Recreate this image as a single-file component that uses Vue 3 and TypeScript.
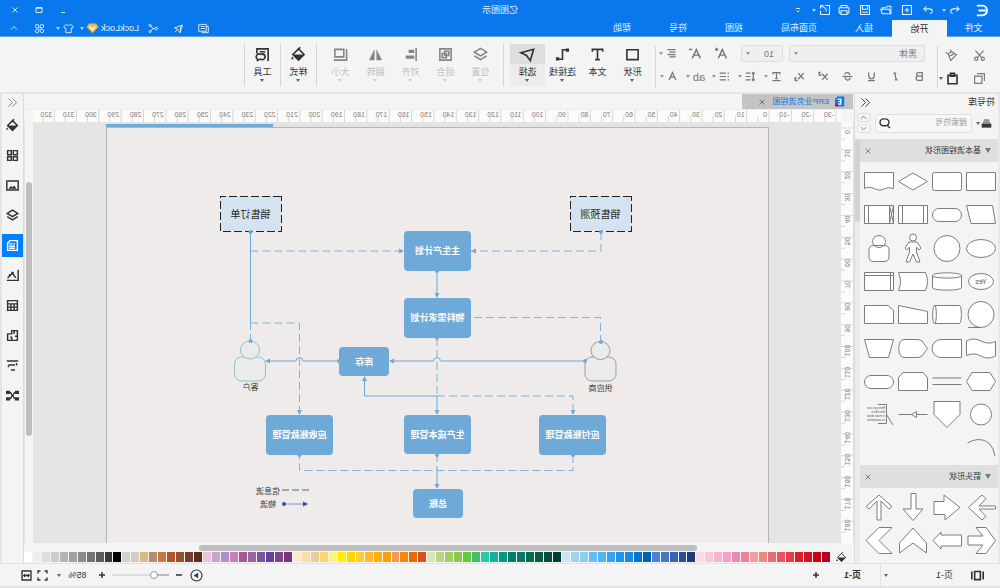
<script setup lang="ts">
import { ref } from 'vue'

interface Stroke { d: string; f?: boolean }

const s = (...ds: string[]): Stroke[] => ds.map(d => ({ d }))
const f = (...ds: string[]): Stroke[] => ds.map(d => ({ d, f: true }))

const icons: Record<string, Stroke[]> = {
  undo: s('M6 3 2.5 6.5 6 10', 'M3 6.5H10C15 6.5 14.5 12 11 13'),
  redo: s('M10 3 13.5 6.5 10 10', 'M13 6.5H6C1 6.5 1.5 12 5 13'),
  add: s('M2 2H14V14H2Z', 'M8 5V11M5 8H11'),
  open: s('M1.5 13V3H6L7.5 5H13V7', 'M1.5 13 4 7H15L13 13Z'),
  save: s('M2 2H14V14H2Z', 'M4.5 2V7H11.5V2', 'M4 11H12'),
  print: s('M4 5V2H12V5', 'M4 12H1.5V5H14.5V12H12', 'M4 9H12V14H4Z'),
  exportFile: s('M8 2H2V14H14V9', 'M14 2H10M14 2V6M6 10C6 6 9 4 13 3'),
  more: s('M4 5H12', 'M5 9 8 12 11 9'),
  close: s('M3 3 13 13M13 3 3 13'),
  maximize: s('M2 3H14V13H2Z', 'M2 4.5H14'),
  minimize: s('M4 13H12'),
  up: s('M2 11 8 5 14 11'),
  down: s('M2 5 8 11 14 5'),
  chevrons: s('M8 2 2 8 8 14', 'M14 2 8 8 14 14'),
  comment: s('M4 2H15V12H4Z', 'M6 5H12M6 8H12', 'M4 5H1V14H11'),
  pointer: s('M2 3 14 7 9 9 6 14ZM5 4V14M9 9 13 13'),
  share: s('M4 6A2 2 0 1 0 4 10 2 2 0 1 0 4 6', 'M6 8H9L12 4M9 8 12 12', 'M13 2A1.5 1.5 0 1 0 13 5 1.5 1.5 0 1 0 13 2M13 11A1.5 1.5 0 1 0 13 14 1.5 1.5 0 1 0 13 11'),
  shirt: s('M5 2 1 5 3 8 4 7V14H12V7L13 8 15 5 11 2C10 4 6 4 5 2Z'),
  apps: s('M7 7H4.5A2.5 2.5 0 1 1 7 4.5ZM9 7V4.5A2.5 2.5 0 1 1 11.5 7ZM7 9V11.5A2.5 2.5 0 1 1 4.5 9ZM9 9H11.5A2.5 2.5 0 1 1 9 11.5Z'),
  cut: s('M3 2 11 11M13 2 5 11', 'M4 10A2 2 0 1 0 4 14 2 2 0 1 0 4 10M12 10A2 2 0 1 0 12 14 2 2 0 1 0 12 10'),
  copy: s('M5 5H14V14H5Z', 'M2 11V2H11'),
  painter: s('M2 7 8 3 12 6 9 14Z', 'M8 3 10 1M12 6 15 4M5 6 11 9'),
  paste: s('M2.5 4H13.5V14.5H2.5Z', 'M5.5 5V1.5H10.5V5Z'),
  bold: s('M4 2.5H9C13 2.5 13 7.5 9 7.5H4ZM4 7.5H10C14 7.5 14 13.5 10 13.5H4Z'),
  italic: s('M7 3H11M5 13H9M9 3 7 13'),
  underline: s('M4 2V7C4 13 12 13 12 7V2', 'M3 14H13'),
  strike: s('M12 5C11 1 4 2 5 6M4 10C5 15 12 14 11 9', 'M1 8H15'),
  sup: s('M2 4 10 13M10 4 2 13', 'M12 2H14.5V4L12 6H15'),
  sub: s('M2 3 10 12M10 3 2 12', 'M12 10H14.5V12L12 14H15'),
  textT: s('M3 5V2.5H13V5M8 2.5V11M6 11H10', 'M2 14H14'),
  spacing: s('M4 2V14M2 4 4 2 6 4M2 12 4 14 6 12', 'M8 3H15M8 8H15M8 13H15'),
  list: s('M6 3H15M6 8H15M6 13H15', 'M1.5 3H3.5M1.5 8H3.5M1.5 13H3.5'),
  alignText: s('M2 2.5H14M2 6H11M2 9.5H14M2 13H11'),
  bigA: s('M2 14 7 3 12 14M4 10H10', 'M12 3H16M14 1V5'),
  smallA: s('M2 14 7 3 12 14M4 10H10', 'M12 3H16'),
  letterA: s('M3 13 8 2 13 13M5 9H11'),
  rect: s('M2 3H14V13.5H2Z'),
  text: s('M2.5 5V2.5H13.5V5M8 2.5V13.5M5.5 13.5H10.5'),
  connector: [...s('M3 3H8V13H13'), ...f('M1 1.5H4.5V5H1ZM11.5 11H15V14.5H11.5Z')],
  select: s('M1.5 2.500 15 6 9 9 5 14.500Z'),
  layers: s('M8 1.5 14.5 5.5 8 9.5 1.5 5.5Z', 'M1.5 9.5 8 13.5 14.5 9.5'),
  group: s('M2 2H14V14H2Z', 'M4.5 4.5H9V9H4.5ZM7 7H11.5V11.5H7Z'),
  align: [...s('M2 1V15'), ...f('M4 3H10V6.5H4ZM4 9H13V12.5H4Z')],
  flip: f('M7 2V14H1ZM9 2 15 14H9Z'),
  size: s('M4.5 2.5H14V10.5H4.5Z', 'M1.5 2V14H15'),
  bucket: [...s('M8 2 14 8 8 14 2 8ZM8 2 6 .5'), ...f('M2 8H14L8 14ZM14.5 10 16 13H13Z')],
  tools: s('M3 14H2V2H14V7M5 5H11M5 8H8', 'M10 8A3 3 0 1 0 10 13 3 3 0 1 0 10 8M12 13 14 15'),
  library: [...f('M1 8H15V14H1Z'), ...s('M3 6H13M4 3H12')],
  search: s('M6.5 1.5A5 5 0 1 1 6.5 11 5 5 0 1 1 6.5 1.5', 'M10 10 14.5 14.5'),
  grid: s('M2 2H7V7H2ZM9.5 2H14V7H9.5ZM2 9.5H7V14H2ZM9.5 9.5H14V14H9.5Z'),
  picture: [...s('M1 2.5H15V13.5H1Z'), ...f('M3 12 6 8 8 10 10 8.5 13 12Z')],
  note: s('M2 2H11L14 5V14H2Z', 'M5 6H7M8 6H12M5 9H12M5 11.5H12'),
  chart: [...s('M1 1V14H15', 'M4 11 8 5 11 8 14 11'), ...f('M6.500 3.500H9.500V6.500H6.500ZM10 6.500H12.500V9H10Z')],
  table: s('M2 2H14V14H2ZM2 6H14M2 10H14M6 6V14M10 6V14'),
  puzzle: s('M2 2H9V6H14V14H2ZM6 2V6M2 9H5M9 14V10H11'),
  gantt: s('M1 2.5H15M3 5V8M5 7.5H13M5 13.5H10M13 8V10'),
  mind: [...s('M4 4C8 4 6 8 8 8 10 8 8 4 12 4M4 12C8 12 6 8 8 8 10 8 8 12 12 12'), ...f('M0 2H5V6H0ZM11 2H16V6H11ZM0 10H5V14H0ZM11 10H16V14H11Z')],
  pages: s('M4.5 3H11.5V13H4.5Z', 'M1 3V13M15 3V13'),
  plus: s('M8 2V14M2 8H14'),
  minus: s('M2 8H14'),
  play: [...s('M8 1.2A6.8 6.8 0 1 0 8 14.8 6.8 6.8 0 1 0 8 1.2'), ...f('M6 4.5 11.5 8 6 11.5Z')],
  full: s('M1.5 5V1.5H5M11 1.5H14.5V5M14.5 11V14.5H11M5 14.5H1.5V11'),
  fit: s('M1.5 1.5H14.5V14.5H1.5Z', 'M4 8H12M6 6 4 8 6 10M10 6 12 8 10 10'),
}

const quick = ['redo', 'add', 'open', 'save', 'print']
const tabs = ['文件', '开始', '插入', '页面布局', '视图', '符号', '帮助']
const formatButtons = [
  { icon: 'bold', label: '加粗' }, { icon: 'italic', label: '斜体' }, { icon: 'underline', label: '下划线' },
  { icon: 'strike', label: '删除线' }, { icon: 'sup', label: '上标' }, { icon: 'sub', label: '下标' },
]
const formatMenus = [{ icon: 'textT', label: '文字方向' }, { icon: 'spacing', label: '行距' }, { icon: 'list', label: '列表' }]

const toolGroups = [
  { cls: 'g4', items: [
    { icon: 'rect', label: '形状', menu: true }, { icon: 'text', label: '文本' },
    { icon: 'connector', label: '连接线', menu: true }, { icon: 'select', label: '选择', menu: true, on: true }] },
  { cls: 'g5', items: ['layers 位置', 'group 组合', 'align 对齐', 'flip 翻转', 'size 大小'].map(t => {
    const [icon, label] = t.split(' ')
    return { icon, label, menu: true, off: true }
  }) },
  { cls: 'g1', items: [{ icon: 'bucket', label: '样式', menu: true }] },
  { cls: 'g1', items: [{ icon: 'tools', label: '工具', menu: true }] },
] as { cls: string; items: { icon: string; label: string; menu?: boolean; on?: boolean; off?: boolean }[] }[]

const flowShapes: string[] = [
  'M4.500 7.500H33.500V25.500H4.500Z',
  'M6.500 7.500H31.500Q33.500 7.500 33.500 9.500V23.500Q33.500 25.500 31.500 25.500H6.500Q4.500 25.500 4.500 23.500V9.500Q4.500 7.500 6.500 7.500Z',
  'M4.500 16.500 19 8 33.500 16.500 19 25Z',
  'M4.500 7.500H33.500V23.500C26 19 22 28 14 24Q10 21.500 4.500 23.500Z',
  'M7.500 7.500H33.500L29 25.500H4.500Z',
  'M11 10.500H27A6.500 6.500 0 0 1 27 23.500H11A6.500 6.500 0 0 1 11 10.500Z',
  'M4.500 7.500H33.500V25.500H4.500ZM8.500 7.500V25.500M29.500 7.500V25.500',
  'M4.500 7.500H33.500V25.500H4.500ZM8.500 7.500V25.500M29.500 7.500V25.500M4.500 7.500 8.500 25.500M8.500 7.500 4.500 25.500',
  'M19 7.500A14.500 9 0 1 0 19 25.500A14.500 9 0 1 0 19 7.500Z',
  'M19 3.500A13 13 0 1 0 19 29.500A13 13 0 1 0 19 3.500Z',
  'M19 2A3.500 3.500 0 1 0 19 9A3.500 3.500 0 1 0 19 2ZM15 10H23L27 16 25 18 22.500 15V20L26 30H22.500L19 22 15.500 30H12L15.500 20V15L13 18 11 16Z',
  'M14 13.500Q9 13.500 9 18V25Q9 29.500 14 29.500H24Q29 29.500 29 25V18Q29 13.500 24 13.500ZM19 3.500A6.500 6 0 1 0 19 15.500A6.500 6 0 1 0 19 3.500Z',
  'M19 8.500A12.500 8 0 1 0 19 24.500A12.500 8 0 1 0 19 8.500Z',
  'M4.500 10.500C4.500 7 33.500 7 33.500 10.500V22.500C33.500 26 4.500 26 4.500 22.500ZM4.500 10.500C4.500 14 33.500 14 33.500 10.500',
  'M6.500 7.500H33.500Q29.500 16.500 33.500 25.500H6.500Q2.500 16.500 6.500 7.500Z',
  'M4.500 7.500H33.500V25.500H4.500ZM4.500 10.500H33.500M7.500 7.500V25.500',
  'M19 3.500A13 13 0 1 0 19 29.500A13 13 0 1 0 19 3.500ZM19 29.500H32',
  'M6.500 7.500H31.500C34 7.500 34 25.500 31.500 25.500H6.500C4 25.500 4 7.500 6.500 7.500M31.500 7.500C29 7.500 29 25.500 31.500 25.500',
  'M4.500 13.500 33.500 7.500V25.500H4.500Z',
  'M10 7.500H33.500V25.500H4.500V12.500Z',
  'M4.500 9.500Q11 13 19 9T33.500 9V23.500Q26 20 19 24T4.500 24Z',
  'M4.500 7.500H25A9 9 0 0 1 25 25.500H4.500Z',
  'M4.500 16.500 10 9Q12 7.500 15 7.500H28C35 7.500 35 25.500 28 25.500H15Q12 25.500 10 24Z',
  'M4.500 7.500H33.500L28.500 25.500H9.500Z',
  'M10 7.500H28L33.500 16.500 28 25.500H10L4.500 16.500Z',
  'M4.500 13H33.500M4.500 19.500H33.500',
  'M9 7.500H29L33.500 12.500V25.500H4.500V12.500Z',
  'M11 10.500H27A6.500 6.500 0 0 1 27 23.500H11A6.500 6.500 0 0 1 11 10.500Z',
  'M19 6A10.500 10.500 0 1 0 19 27A10.500 10.500 0 1 0 19 6Z',
  'M6 3.500H32V16.500L19 29.500 6 16.500Z',
  'M4.500 16.500H15.500M15.500 13.500V19.500L20.500 16.500ZM20.500 16.500H33.500',
  'M20 6.500H11.500V25.500H20M11.500 16.500 5 27',
  'M5 24Q8 7 22 7.500Q28 8 32.500 11',
]
const arrowShapes: string[] = [
  'M4.500 15H21L14 7.500 18 4 31.500 16.500 18 29 14 25.500 21 18H4.500Z',
  'M6 16.500 22 4V10.500H32V23.500H21V29Z',
  'M16 2.500H21V18H29L19 29.500 9 18H16Z',
  'M17 29V10L9 18 6 15.500 19 4 32 15.500 29 18 21 10V29Z',
  'M4.500 16.500 14 3.500H24L17 12H32V21H17L24 29.500H14Z',
  'M4.500 11H25V8L33 16.500 25 25V22H4.500Z',
  'M5.500 19 19 4 32.500 19V29L19 19 5.500 29Z',
  'M6 3.500H19L32 16.500 19 29.500H6L19 16.500Z',
]

const sidebar = ['bucket', 'grid', 'picture', 'layers', 'note', 'chart', 'table', 'puzzle', 'gantt', 'mind']
const activeSide = ref('note')
const font = ref('黑体')
const size = ref('10')
const zoom = ref(23)

const hTicks = Array.from({ length: 36 }, (_, i) => ({ v: (i - 3) * 10, p: 72 + (i - 3) * 22.34 }))
const vTicks = Array.from({ length: 19 }, (_, i) => ({ v: i * 10, p: 6 + i * 21.85 }))

const palette = (
  'b4001e c8001e d2141e dc1e28 e63c46 eb5064 e66e78 eb8c78 f0a0a0 f0829b e68cb4 f5a0c8 fab4c8 fac8d2 fadce6 ' +
  '1e3c78 28509b 3c64b4 4678be 5082d2 0064b4 0078d2 148ce1 1e96eb 3ca0f0 50b4f0 64bef5 8ccdf0 a0d2f0 c8e6f5 ' +
  '003c32 00503c 0a5a46 006e50 0a7864 007d6e 009b82 14b496 28c8aa 46be64 64c83c 8cc850 a0cd64 b4d78c dce6b4 dc501e ' +
  'e96a00 f5870a f19a58 f0a30a ffb000 ffb833 fbcf33 ffd700 fff000 fdf37f ffd470 eccd97 fddcab fde8d0 7b3276 85428c 67409a 75559c 9866a0 a05a8c ' +
  'cf7fb4 a990d0 c8a5cb ebc3dc 5b2b1a 753c30 95502c b0552a c17a42 b98b72 e0b980 d4ccc8 ccd4cc 000000 3f3739 5b5b5b 737373 8b8b8b a0a0a0 b4b4b4 cccccc dddddd eeeeee ffffff'
).split(' ').map(c => '#' + c)

const boxes = [
  { x: 298, y: 103, w: 67, h: 40, t: '主生产计划' }, { x: 298, y: 170, w: 67, h: 40, t: '物料需求计划' },
  { x: 380, y: 219, w: 50, h: 29, t: '库存' }, { x: 163, y: 287, w: 67, h: 40, t: '应付账款管理' },
  { x: 298, y: 287, w: 67, h: 39, t: '生产成本管理' }, { x: 436, y: 287, w: 67, h: 40, t: '应收账款管理' },
  { x: 306, y: 361, w: 50, h: 29, t: '总账' },
]
const solid = [
  'M332 143V166', 'M184 233H328.500A3.500 3.500 0 0 1 335.500 233H376', 'M430 233H466A3.500 3.500 0 0 1 473 233H499',
  'M332 268H404.500V252', 'M332 268V283', 'M332 338V357', 'M518.500 104V194',
]
const dashed = [
  'M168 104V123H302', 'M518.500 123H369', 'M518.500 194V213', 'M518.500 195H469.500V283', 'M295 189.500H168.500V213',
  'M332 210V268', 'M332 268H196V283', 'M196 327V342.500H469.500V327', 'M332 326V338',
]
const heads = [
  'M298 123 293 120.500V125.500Z', 'M365 123 370 120.500V125.500Z', 'M332 170 329.500 165H334.500Z', 'M380 233 375 230.500V235.500Z',
  'M504 233 499 230.500V235.500Z', 'M404.500 248 402 253H407Z', 'M332 287 329.500 282H334.500Z', 'M196 287 193.500 282H198.500Z',
  'M469.500 287 467 282H472Z', 'M332 361 329.500 356H334.500Z',
]
const dots = [[518.5, 213], [168, 214], [184, 233], [332, 143], [332, 210], [430, 233], [332, 327], [196, 327], [469.5, 327]]
</script>

<template>
  <div class="app">
    <header class="top">
      <div class="titlebar">
        <div class="quick">
          <svg class="logo" viewBox="0 0 16 16" aria-label="logo"><path d="M15 2H8A5.500 6 0 0 0 8 14H15M4 8H13" /></svg>
          <button class="menu-btn" aria-label="undo">
            <svg class="ic" viewBox="0 0 16 16"><path v-for="p in icons.undo" :key="p.d" :d="p.d" :class="{ fill: p.f }" /></svg><i class="caret" />
          </button>
          <button v-for="q in quick" :key="q" class="quick-btn" :aria-label="q">
            <svg class="ic" viewBox="0 0 16 16"><path v-for="p in icons[q]" :key="p.d" :d="p.d" /></svg>
          </button>
          <button class="menu-btn" aria-label="export">
            <svg class="ic" viewBox="0 0 16 16"><path v-for="p in icons.exportFile" :key="p.d" :d="p.d" /></svg><i class="caret" />
          </button>
          <button class="quick-btn" aria-label="more"><svg class="ic tiny" viewBox="0 0 16 16"><path v-for="p in icons.more" :key="p.d" :d="p.d" /></svg></button>
        </div>
        <h1>亿图图示</h1>
        <div class="win">
          <button v-for="w in ['minimize', 'maximize', 'close']" :key="w" :aria-label="w"><svg class="ic tiny" viewBox="0 0 16 16"><path v-for="p in icons[w]" :key="p.d" :d="p.d" /></svg></button>
        </div>
      </div>
      <nav class="tabs">
        <button v-for="t in tabs" :key="t" class="tab" :class="{ active: t === '开始', file: t === '文件' }">{{ t }}</button>
        <div class="account">
          <button v-for="a in ['comment', 'pointer', 'share']" :key="a" class="acc" :aria-label="a"><svg class="ic small thin" viewBox="0 0 16 16"><path v-for="p in icons[a]" :key="p.d" :d="p.d" /></svg></button>
          <button class="user">LockLock<svg class="gem" viewBox="0 0 16 16"><path d="M3.500 2H12.500L16 6.500 8 15 0 6.500Z" fill="#f6b544" /><path d="M4.500 6 8 10.500 11.500 6" fill="none" stroke="#fff" stroke-width="2" /></svg><i class="caret" /></button>
          <button class="shirt" aria-label="theme"><svg class="ic small thin" viewBox="0 0 16 16"><path v-for="p in icons.shirt" :key="p.d" :d="p.d" /></svg><i class="caret" /></button>
          <button class="apps" aria-label="apps"><svg class="ic small thin" viewBox="0 0 16 16"><path v-for="p in icons.apps" :key="p.d" :d="p.d" /></svg></button>
          <button class="fold" aria-label="collapse"><svg class="ic tiny" viewBox="0 0 16 16"><path v-for="p in icons.up" :key="p.d" :d="p.d" /></svg></button>
        </div>
      </nav>
    </header>

    <section class="ribbon">
      <div class="clip">
        <button aria-label="cut"><svg class="ic" viewBox="0 0 16 16"><path v-for="p in icons.cut" :key="p.d" :d="p.d" /></svg></button>
        <button aria-label="format painter"><svg class="ic" viewBox="0 0 16 16"><path v-for="p in icons.painter" :key="p.d" :d="p.d" /></svg></button>
        <button aria-label="copy"><svg class="ic" viewBox="0 0 16 16"><path v-for="p in icons.copy" :key="p.d" :d="p.d" /></svg></button>
        <button class="dark paste" aria-label="paste"><svg class="ic bold" viewBox="0 0 16 16"><path v-for="p in icons.paste" :key="p.d" :d="p.d" /></svg><i class="caret" /></button>
      </div>
      <div class="font">
        <div class="frow one">
          <label class="pick family"><select v-model="font" aria-label="字体"><option>黑体</option></select><i class="caret" /></label>
          <label class="pick num"><select v-model="size" aria-label="字号"><option>10</option></select><i class="caret" /></label>
          <button class="wide" aria-label="larger"><svg class="ic" viewBox="0 0 16 16"><path v-for="p in icons.bigA" :key="p.d" :d="p.d" /></svg></button>
          <button class="wide" aria-label="smaller"><svg class="ic" viewBox="0 0 16 16"><path v-for="p in icons.smallA" :key="p.d" :d="p.d" /></svg></button>
          <button class="fm" aria-label="align"><svg class="ic small" viewBox="0 0 16 16"><path v-for="p in icons.alignText" :key="p.d" :d="p.d" /></svg><i class="caret" /></button>
        </div>
        <div class="frow two">
          <button v-for="b in formatButtons" :key="b.icon" class="fb" :aria-label="b.label"><svg class="ic small" viewBox="0 0 16 16"><path v-for="p in icons[b.icon]" :key="p.d" :d="p.d" /></svg></button>
          <button v-for="b in formatMenus" :key="b.icon" class="fm" :aria-label="b.label"><svg class="ic small" viewBox="0 0 16 16"><path v-for="p in icons[b.icon]" :key="p.d" :d="p.d" /></svg><i class="caret" /></button>
          <button class="fm ab">ab<i class="caret" /></button>
          <button class="fm" aria-label="color"><svg class="ic small" viewBox="0 0 16 16"><path v-for="p in icons.letterA" :key="p.d" :d="p.d" /></svg><i class="caret" /></button>
        </div>
      </div>
      <div v-for="(g, i) in toolGroups" :key="i" class="group" :class="g.cls">
        <button v-for="t in g.items" :key="t.label" class="tool" :class="{ on: t.on, off: t.off }">
          <span class="face"><svg class="ic big" viewBox="0 0 16 16"><path v-for="p in icons[t.icon]" :key="p.d" :d="p.d" :class="{ fill: p.f }" /></svg></span>
          <span>{{ t.label }}</span><i v-if="t.menu" class="caret" />
        </button>
      </div>
    </section>

    <main class="work">
      <aside class="lib">
        <div class="lib-head"><h2>符号库</h2><button aria-label="collapse library"><svg class="ic small thin" viewBox="0 0 16 16"><path v-for="p in icons.chevrons" :key="p.d" :d="p.d" /></svg></button></div>
        <div class="lib-search">
          <button class="libmenu dark" aria-label="libraries"><svg class="ic small" viewBox="0 0 16 16"><path v-for="p in icons.library" :key="p.d" :d="p.d" :class="{ fill: p.f }" /></svg><i class="caret" /></button>
          <label class="find"><input type="text" placeholder="搜索符号" aria-label="搜索符号"><svg class="ic small glass" viewBox="0 0 16 16"><path v-for="p in icons.search" :key="p.d" :d="p.d" transform="matrix(-1 0 0 1 16 0)" /></svg></label>
          <div class="steps">
            <button v-for="d in ['up', 'down']" :key="d" :aria-label="d"><svg viewBox="0 0 16 16" class="ic step"><path v-for="p in icons[d]" :key="p.d" :d="p.d" /></svg></button>
          </div>
        </div>
        <div class="lib-body">
          <div class="sections">
            <h3><i class="caret tri" />基本流程图形状<button aria-label="close section"><svg class="ic tiny" viewBox="0 0 16 16"><path v-for="p in icons.close" :key="p.d" :d="p.d" /></svg></button></h3>
            <div class="shapes flow">
              <svg v-for="(d, i) in flowShapes" :key="i" viewBox="2 0 34 33">
                <path :d="d" :class="{ open: i === 31 || i === 32 }" />
                <text v-if="i === 12" x="19" y="19" text-anchor="middle">Yes</text>
                <g v-if="i === 31" class="note"><text x="13" y="11">Here you can</text><text x="13" y="15">describe it</text><text x="13" y="19">in more detail</text><text x="13" y="23">as annotation</text></g>
              </svg>
            </div>
            <h3><i class="caret tri" />箭头形状<button aria-label="close section"><svg class="ic tiny" viewBox="0 0 16 16"><path v-for="p in icons.close" :key="p.d" :d="p.d" /></svg></button></h3>
            <div class="shapes arrows">
              <svg v-for="(d, i) in arrowShapes" :key="i" viewBox="2 0 34 33"><path :d="d" /></svg>
            </div>
          </div>
          <div class="track"><div class="thumb" /></div>
        </div>
      </aside>

      <section class="center">
        <div class="docs">
          <button class="doc"><svg class="docicon" viewBox="0 0 12 12"><path d="M1 0H9L12 3V12H1Z" fill="#0a78ed" /><path d="M9 3H5V9H9M5 6H8" fill="none" stroke="#fff" stroke-width="1.500" /><circle cx="10" cy="10" r="2" fill="#f00" /></svg><span>ERP业务流程图</span><svg class="ic tiny" viewBox="0 0 16 16"><path v-for="p in icons.close" :key="p.d" :d="p.d" /></svg></button>
        </div>
        <div class="hrule">
          <svg width="808" height="12">
            <g v-for="t in hTicks" :key="t.v"><path :d="`M${t.p} 0V12M${t.p + 11.2} 6V12`" /><text :x="t.p + 2" y="7">{{ t.v }}</text></g>
          </svg>
        </div>
        <div class="stage">
          <div class="vrule">
            <svg width="13" height="422">
              <g v-for="t in vTicks" :key="t.v"><path :d="`M0 ${t.p}H13M8 ${t.p + 11}H13`" /><text :transform="`translate(8 ${t.p + 4}) rotate(-90)`" text-anchor="middle">{{ t.v }}</text></g>
            </svg>
          </div>
          <div class="canvas">
            <div class="bar"><i /></div>
            <div class="page">
              <svg width="663" height="416" viewBox="0 0 663 416">
                <g class="wires"><path v-for="d in solid" :key="d" :d="d" /><path v-for="d in dashed" :key="d" :d="d" class="dash" /></g>
                <g class="person"><rect x="153" y="229" width="31" height="24" rx="7" /><ellipse cx="168.500" cy="222.500" rx="9.500" ry="9" /></g>
                <g class="person teal"><rect x="503.500" y="229" width="31" height="24" rx="7" /><ellipse cx="519" cy="222" rx="9.500" ry="9" /></g>
                <g class="ends"><path v-for="d in heads" :key="d" :d="d" /><circle v-for="c in dots" :key="c.join()" :cx="c[0]" :cy="c[1]" r="2" /></g>
                <g v-for="b in boxes" :key="b.t" class="box"><rect :x="b.x" :y="b.y" :width="b.w" :height="b.h" rx="4" /><text :x="b.x + b.w / 2" :y="b.y + b.h / 2 + 3" text-anchor="middle">{{ b.t }}</text></g>
                <g class="source"><rect x="138" y="68" width="61" height="35" /><text x="168.500" y="90" text-anchor="middle">销售预测</text><rect x="488" y="68" width="61" height="35" /><text x="518.500" y="90" text-anchor="middle">销售订单</text></g>
                <g class="ends"><circle cx="168" cy="104" r="2" /><circle cx="518.500" cy="104" r="2" /></g>
                <g class="cap"><text x="168.500" y="263" text-anchor="middle">供应商</text><text x="518.500" y="262" text-anchor="middle">客户</text></g>
                <g class="legend"><path d="M460 362H488" stroke="#4f6580" stroke-dasharray="7 3" /><text x="489" y="366">信息流</text><path d="M462 376H485" stroke="#7a92c6" /><path d="M466 373.500V378.500L461 376Z" class="navy" /><circle cx="485" cy="376" r="2" class="navy" /><text x="493" y="379">物流</text></g>
              </svg>
            </div>
          </div>
          <div class="vscroll"><div class="thumb" /></div>
        </div>
        <div class="hscroll"><div class="thumb" /></div>
        <div class="colors">
          <svg class="ic small dark" viewBox="0 0 16 16"><path v-for="p in icons.bucket" :key="p.d" :d="p.d" :class="{ fill: p.f }" /></svg>
          <div class="swatches"><button v-for="(c, i) in palette" :key="i" :style="{ background: c }" :aria-label="c" /></div>
        </div>
      </section>

      <nav class="side">
        <button class="collapse" aria-label="expand panel"><svg class="ic small thin" viewBox="0 0 16 16"><path v-for="p in icons.chevrons" :key="p.d" :d="p.d" /></svg></button>
        <button v-for="n in sidebar" :key="n" :class="{ active: n === activeSide }" :aria-label="n" @click="activeSide = n">
          <svg class="ic" viewBox="0 0 16 16"><path v-for="p in icons[n]" :key="p.d" :d="p.d" :class="{ fill: p.f }" /></svg>
        </button>
      </nav>
    </main>

    <footer class="status">
      <button class="pg" aria-label="pages"><svg class="ic bold" viewBox="0 0 16 16"><path v-for="p in icons.pages" :key="p.d" :d="p.d" /></svg></button>
      <button class="pagepick"><span>页-1</span><i class="caret" /></button>
      <button class="current">页-1</button>
      <button class="sb" aria-label="add page"><svg class="ic tiny bold" viewBox="0 0 16 16"><path v-for="p in icons.plus" :key="p.d" :d="p.d" /></svg></button>
      <div class="zoom">
        <button class="sb" aria-label="present"><svg class="ic" viewBox="0 0 16 16"><path v-for="p in icons.play" :key="p.d" :d="p.d" :class="{ fill: p.f }" /></svg></button>
        <button class="sb" aria-label="zoom out"><svg class="ic tiny bold" viewBox="0 0 16 16"><path v-for="p in icons.minus" :key="p.d" :d="p.d" /></svg></button>
        <input v-model="zoom" type="range" min="0" max="100" aria-label="zoom">
        <button class="sb" aria-label="zoom in"><svg class="ic tiny bold" viewBox="0 0 16 16"><path v-for="p in icons.plus" :key="p.d" :d="p.d" /></svg></button>
        <button class="pct"><span>85%</span><i class="caret" /></button>
        <button class="sb end" aria-label="full screen"><svg class="ic small bold" viewBox="0 0 16 16"><path v-for="p in icons.full" :key="p.d" :d="p.d" /></svg></button>
        <button class="sb end" aria-label="fit page"><svg class="ic small bold" viewBox="0 0 16 16"><path v-for="p in icons.fit" :key="p.d" :d="p.d" /></svg></button>
      </div>
    </footer>
  </div>
</template>

<style>
body { overflow: hidden; }
</style>

<style scoped>
* { box-sizing: border-box; }
.app { display: flex; flex-direction: column; height: 100vh; transform: scaleX(-1); background: #f4f4f4; color: #222; font: 9px/12px "Liberation Sans", "Noto Sans CJK SC", sans-serif; overflow: hidden; }
button { display: flex; align-items: center; justify-content: center; border: 0; padding: 0; background: none; color: inherit; font: inherit; }
h1, h2, h3 { margin: 0; font: inherit; }
.ic { width: 13px; height: 13px; flex: none; fill: none; stroke: currentColor; stroke-width: 1.4; overflow: visible; }
.ic .fill { fill: currentColor; stroke: none; }
.ic.small { width: 11px; height: 11px; }
.ic.tiny { width: 8px; height: 8px; stroke-width: 1.8; }
.ic.big { width: 15px; height: 15px; stroke-width: 1.7; }
.ic.thin { stroke-width: 1.3; }
.ic.bold { stroke-width: 2; }
.ic.tiny.bold { stroke-width: 3; }
.dark { color: #333; }
.caret { flex: none; border: 2px solid transparent; border-top: 3px solid currentColor; border-bottom: 0; width: 0; height: 0; opacity: 0.75; }

.top { flex: none; background: #0a78ed; color: #e6f1fd; border-bottom: 1px solid #5ca5f2; }
.titlebar { display: grid; grid-template-columns: 1fr auto 1fr; height: 20px; align-items: center; }
.quick { display: flex; align-items: center; }
.quick .ic { width: 12px; height: 12px; }
.quick .ic.tiny { width: 8px; height: 8px; }
.logo { width: 13px; height: 13px; margin: 0 12px 0 11px; fill: none; stroke: #fff; stroke-width: 2.4; }
.menu-btn { gap: 3px; width: 25px; }
.quick-btn { width: 21px; height: 18px; }
.win { display: flex; justify-content: flex-end; padding-right: 3px; }
.win button { width: 24px; height: 18px; }
.tabs { display: flex; height: 16px; }
.tab { padding: 0 19px; }
.tab.file { width: 53px; padding: 0; }
.tab.active { width: 55px; padding: 0; background: #f4f4f4; color: #333; border-radius: 1px 1px 0 0; margin-bottom: -1px; }
.account { display: flex; margin-left: auto; }
.acc { width: 25px; }
.user { gap: 0; padding-left: 2px; }
.gem { width: 13px; height: 12px; margin: 0 2px; }
.shirt { gap: 3px; width: 29px; }
.apps { width: 22px; }
.fold { width: 29px; }

.ribbon { display: flex; flex: none; height: 57px; padding-top: 6px; border-bottom: 2px solid #e5e5e5; color: #777; }
.clip { display: grid; grid-template-columns: 28px 28px; grid-template-rows: 23px 23px; padding-left: 6px; border-right: 1px solid #d6d6d6; height: 42px; margin-top: 3px; }
.clip button { margin-top: -4px; }
.paste { gap: 3px; padding-left: 6px; }
.font { width: 282px; height: 42px; margin-top: 3px; border-right: 1px solid #d6d6d6; }
.font .ic { stroke-width: 1.8; }
.frow { display: flex; height: 23px; align-items: center; margin-top: -4px; }
.frow.two { margin-top: 0; padding-left: 5px; }
.frow.one { padding-left: 12px; }
.pick { display: flex; align-items: center; height: 17px; padding-right: 4px; border: 1px solid #dedede; background: #efefef; border-radius: 2px; }
.pick select { flex: 1; min-width: 0; appearance: none; border: 0; background: none; font: inherit; color: #777; padding: 0 7px; outline: 0; }
.pick.family { width: 136px; margin-right: 6px; }
.pick.num { width: 42px; margin-right: 6px; }
.pick.num select { padding: 0 8px; }
.wide { width: 26px; }
.fb { width: 24px; }
.fm { gap: 3px; width: 26px; padding-left: 3px; }
.fm.ab { font-size: 11px; }
.group { display: flex; border-right: 1px solid #d6d6d6; height: 42px; margin-top: 1px; color: #333; }
.g4, .g5 { padding: 0 6px 0 5px; }
.tool { flex-direction: column; justify-content: flex-start; width: 35px; height: 42px; white-space: nowrap; }
.tool .face { display: flex; align-items: center; justify-content: center; width: 35px; height: 20px; margin-bottom: 2px; }
.tool.on { background: #ececec; }
.tool.on .face { background: #dedede; }
.tool.off { color: #c0c0c0; }
.tool.off .ic { color: #858585; }
.tool .caret { margin-top: 1px; }

.work { display: flex; flex: 1; min-height: 0; }
.lib { display: flex; flex-direction: column; flex: none; width: 146px; border-left: 2px solid #e8e8e8; border-right: 1px solid #dcdcdc; }
.lib-head { display: flex; justify-content: space-between; align-items: center; height: 16px; padding: 0 5px 0 3px; color: #333; }
.lib-search { display: flex; align-items: center; height: 29px; padding-bottom: 3px; }
.libmenu { width: 26px; gap: 1px; padding-left: 2px; }
.find { display: flex; align-items: center; width: 97px; height: 19px; padding: 0 4px; border: 1px solid #e0e0e0; border-radius: 2px; color: #333; background: #f7f7f7; }
.find input { flex: 1; min-width: 0; border: 0; background: none; padding: 0; font: 8px/12px "Liberation Sans", "Noto Sans CJK SC", sans-serif; outline: 0; }
.find input::placeholder { color: #999; }
.ic.glass { stroke-width: 2; }
.steps { display: flex; flex-direction: column; gap: 2px; margin-left: 4px; }
.steps button { width: 14px; height: 9px; border: 1px solid #e0e0e0; border-radius: 2px; }
.ic.step { width: 7px; height: 7px; color: #777; stroke-width: 2; }
.lib-body { display: flex; flex: 1; min-height: 0; }
.sections { flex: 1; overflow: hidden; }
h3 { display: flex; align-items: center; gap: 4px; height: 23px; padding: 0 4px 0 7px; background: #dfdfdf; color: #333; font-size: 8px; }
h3 button { margin-left: auto; color: #777; }
.tri { border-width: 5px 3px 0; color: #555; }
.shapes { display: grid; grid-template-columns: repeat(4, 34px); grid-auto-rows: 1fr; }
.flow { height: 303px; padding-top: 3px; }
.arrows { height: 69px; padding-top: 3px; }
.shapes svg { width: 34px; height: 33px; fill: #fff; stroke: #7d7d7d; stroke-width: 1; }
.shapes .open { fill: none; }
.shapes text { fill: #555; stroke: none; font-size: 7px; }
.shapes .note text { font-size: 3px; }
.track { width: 5px; background: #ebebeb; }
.track .thumb { height: 83px; background: #d2d2d2; border-radius: 3px; }

.center { display: flex; flex-direction: column; flex: 1; min-width: 0; }
.docs { display: flex; height: 16px; padding-left: 1px; border-bottom: 1px solid #ececec; }
.doc { width: 111px; background: #c4c4c4; color: #0a78ed; gap: 6px; font-size: 8px; justify-content: flex-start; padding: 0 16px 0 8px; }
.doc span { flex: 1; text-align: left; white-space: nowrap; }
.doc .ic { color: #666; }
.docicon { width: 10px; height: 11px; }
.hrule { height: 12px; padding-left: 13px; margin-right: 9px; overflow: hidden; }
.hrule svg, .vrule svg { display: block; background: #fbfbfb; stroke: #d6d6d6; fill: none; }
.hrule text, .vrule text { stroke: none; fill: #857a72; font-size: 7px; }
.stage { display: flex; flex: 1; min-height: 0; overflow: hidden; }
.vrule { flex: none; border-left: 1px solid #e0e0e0; width: 13px; overflow: hidden; }
.canvas { flex: 1; min-width: 0; display: flex; flex-direction: column; background: #e4e4e4; padding: 2px 73px 0 72px; }
.bar { flex: none; display: flex; justify-content: flex-end; height: 4px; border-bottom: 1px solid #b6b6b6; }
.bar i { width: 167px; height: 3px; background: #6ea9d7; }
.page { flex: 1; min-height: 0; overflow: hidden; background: #efebea; border-right: 1px solid #b6b6b6; border-left: 1px solid #b6b6b6; }
.page svg { display: block; margin-left: -1px; }
.wires { fill: none; stroke: #6ea9d7; stroke-width: 1; }
.wires .dash { stroke: #7fb2da; stroke-dasharray: 8 4; }
.ends { fill: #6ea9d7; }
.person { fill: #ebebeb; stroke: #a09c9a; }
.person.teal { stroke: #8cc4c8; }
.box rect { fill: #6ea9d7; }
.box text { fill: #fff; font-weight: 700; font-size: 9px; }
.source rect { fill: #d5e2ef; stroke: #222; stroke-dasharray: 8 3; shape-rendering: crispEdges; }
.source text { font-size: 10px; fill: #222; }
.cap text, .legend text { font-size: 8px; fill: #333; }
.navy { fill: #2f559f; }
.vscroll { width: 9px; padding: 60px 1px 0; border-right: 1px solid #e4e4e4; background: #f4f4f4; }
.vscroll .thumb { height: 254px; background: #bfbfbf; border-radius: 4px; }
.hscroll { height: 8px; padding: 2px 0 0 157px; }
.hscroll .thumb { width: 74%; height: 6px; background: #bfbfbf; border-radius: 3px; }
.colors { display: flex; align-items: center; height: 12px; padding-left: 7px; gap: 6px; }
.swatches { display: flex; flex: 1; gap: 1px; }
.swatches button { flex: 1; height: 10px; }

.side { display: flex; flex-direction: column; width: 24px; flex: none; border-right: 2px solid #e4e4e4; border-left: 1px solid #dcdcdc; color: #333; }
.side button { height: 23px; margin-bottom: 7px; }
.side .ic { stroke-width: 1.8; }
.side .collapse { height: 17px; margin: 0 0 3px; color: #777; }
.side .collapse .ic { stroke-width: 1.3; }
.side .active { background: #0080ff; color: #fff; }

.status { display: flex; align-items: center; flex: none; height: 25px; border-top: 1px solid #e2e2e2; border-bottom: 2px solid #e4e4e4; color: #333; }
.pg { width: 44px; }
.pagepick { width: 76px; padding: 0 3px; justify-content: space-between; border-right: 1px solid #e2e2e2; height: 100%; }
.current { font-weight: 700; width: 55px; }
.sb { width: 18px; }
.zoom { display: flex; align-items: center; margin-left: auto; padding-right: 19px; }
.zoom input { appearance: none; width: 57px; height: 11px; margin: 0 1px; background: none; }
.zoom input::-webkit-slider-runnable-track { height: 2px; background: linear-gradient(90deg, #bbb 23%, #dedede 23%); }
.zoom input::-webkit-slider-thumb { appearance: none; width: 8px; height: 8px; margin-top: -3px; border: 1px solid #999; border-radius: 50%; background: #fff; }
.pct { width: 42px; gap: 7px; }
.sb.end { width: 16px; }
</style>
